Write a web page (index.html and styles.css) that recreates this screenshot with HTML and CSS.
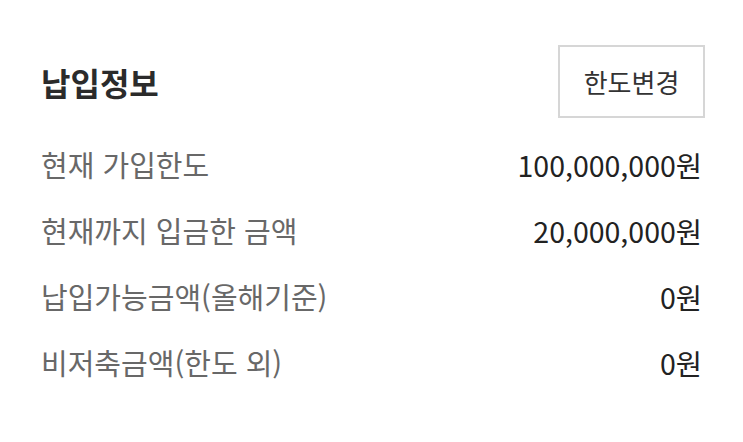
FILE: index.html
```html
<!DOCTYPE html>
<html lang="ko">
<head>
<meta charset="utf-8">
<link rel="stylesheet" href="styles.css">
</head>
<body>
<section class="panel">
  <header class="head">
    <h2 class="title">납입정보</h2>
    <button class="btn">한도변경</button>
  </header>
  <ul class="rows">
    <li class="row"><span class="label">현재 가입한도</span><span class="value">100,000,000원</span></li>
    <li class="row"><span class="label">현재까지 입금한 금액</span><span class="value">20,000,000원</span></li>
    <li class="row"><span class="label">납입가능금액(올해기준)</span><span class="value">0원</span></li>
    <li class="row"><span class="label">비저축금액(한도 외)</span><span class="value">0원</span></li>
  </ul>
</section>
</body>
</html>
```
FILE: styles.css
```css
html, body {
  margin: 0;
  padding: 0;
  background: #ffffff;
}
body {
  font-family: "Noto Sans CJK KR", "Noto Sans", sans-serif;
}
.panel {
  padding: 45px 38px 0 41px;
}
.head {
  display: flex;
  justify-content: space-between;
  align-items: center;
}
.title {
  margin: 0;
  font-size: 32px;
  font-weight: 700;
  color: #2b2b2b;
}
.btn {
  width: 147px;
  height: 73px;
  border: 2px solid #d6d6d6;
  background: #fff;
  font-family: inherit;
  font-size: 26px;
  color: #333;
  padding: 0;
}
.rows {
  list-style: none;
  margin: 13px 3px 0 0;
  padding: 0;
}
.row {
  display: flex;
  justify-content: space-between;
  align-items: center;
  height: 66px;
  font-size: 29px;
}
.label {
  color: #686868;
}
.value {
  color: #222;
  font-weight: 400;
  font-size: 28.5px;
}
```
